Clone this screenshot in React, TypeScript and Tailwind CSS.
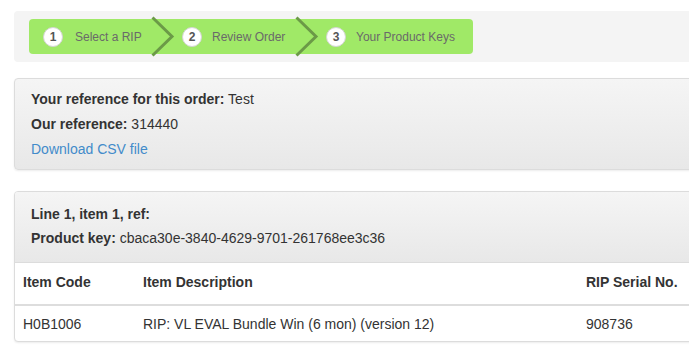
import React from "react";

function Chevron() {
  return (
    <svg width="24" height="41" viewBox="0 0 24 41" className="-my-[3px] shrink-0 overflow-visible">
      <path d="M1.5 1.5 L21 20.5 L1.5 39.5" fill="none" stroke="#6b9a47" strokeWidth="3" strokeLinejoin="miter" />
    </svg>
  );
}

function Circle({ n }: { n: number }) {
  return (
    <div className="w-[20px] h-[20px] rounded-full bg-white border border-[#d4d4d4] flex items-center justify-center text-[12px] font-bold text-[#555] leading-none shrink-0">
      {n}
    </div>
  );
}

export default function App() {
  return (
    <div className="w-[689px] h-[351px] overflow-hidden bg-white" style={{ fontFamily: '"Liberation Sans", Arial, sans-serif' }}>
      <div className="w-[720px] pl-[14px] pt-[11px]">
        {/* stepper strip */}
        <div className="h-[51px] bg-[#f4f4f4] rounded-[4px] pt-[8px] pl-[15px]">
          <div className="w-[444px] h-[35px] bg-[#a0e967] rounded-[4px] flex items-center pl-[14px] text-[12px] text-[#6a6a6a]">
            <Circle n={1} />
            <span className="ml-[12px] w-[76px]">Select a RIP</span>
            <Chevron />
            <div className="ml-[7px]"><Circle n={2} /></div>
            <span className="ml-[10px] w-[83px]">Review Order</span>
            <Chevron />
            <div className="ml-[7px]"><Circle n={3} /></div>
            <span className="ml-[10px]">Your Product Keys</span>
          </div>
        </div>

        {/* panel 1 */}
        <div className="mt-[16px] border border-[#dcdcdc] rounded-[4px] bg-gradient-to-b from-[#f5f5f5] to-[#e8e8e8] shadow-[0_1px_2px_rgba(0,0,0,0.08)] pt-[10px] pb-[10px] pl-[16px] flex flex-col gap-[5px] text-[14px] leading-[20px] text-[#333]">
          <div><span className="font-bold">Your reference for this order:</span> Test</div>
          <div><span className="font-bold">Our reference:</span> 314440</div>
          <div className="text-[#428bca]">Download CSV file</div>
        </div>

        {/* panel 2 */}
        <div className="mt-[21px] border border-[#dcdcdc] rounded-[4px] bg-white shadow-[0_1px_2px_rgba(0,0,0,0.08)] text-[14px] leading-[20px] text-[#333] overflow-hidden">
          <div className="bg-gradient-to-b from-[#f5f5f5] to-[#e8e8e8] border-b border-[#dcdcdc] pt-[12px] pb-[14px] pl-[16px] flex flex-col gap-[4px]">
            <div className="font-bold">Line 1, item 1, ref:</div>
            <div><span className="font-bold">Product key:</span> cbaca30e-3840-4629-9701-261768ee3c36</div>
          </div>
          <div className="flex font-bold pt-[9px] pb-[12px] border-b-2 border-[#dddddd]">
            <div className="w-[120px] pl-[8px]">Item Code</div>
            <div className="w-[443px] pl-[8px]">Item Description</div>
            <div className="pl-[8px]">RIP Serial No.</div>
          </div>
          <div className="flex pt-[8px] pb-[7px]">
            <div className="w-[120px] pl-[8px]">H0B1006</div>
            <div className="w-[443px] pl-[8px]">RIP: VL EVAL Bundle Win (6 mon) (version 12)</div>
            <div className="pl-[8px]">908736</div>
          </div>
        </div>
      </div>
    </div>
  );
}
